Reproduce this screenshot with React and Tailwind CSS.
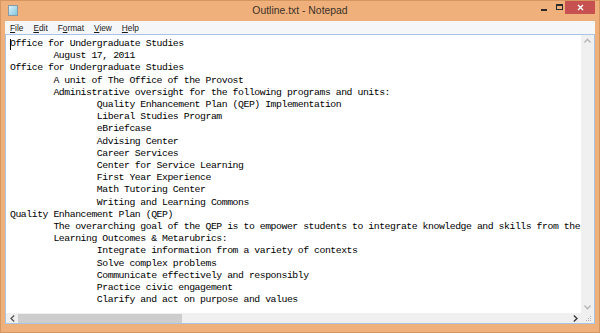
const T = '        ';

const lines = [
  'Office for Undergraduate Studies',
  T + 'August 17, 2011',
  'Office for Undergraduate Studies',
  T + 'A unit of The Office of the Provost',
  T + 'Administrative oversight for the following programs and units:',
  T + T + 'Quality Enhancement Plan (QEP) Implementation',
  T + T + 'Liberal Studies Program',
  T + T + 'eBriefcase',
  T + T + 'Advising Center',
  T + T + 'Career Services',
  T + T + 'Center for Service Learning',
  T + T + 'First Year Experience',
  T + T + 'Math Tutoring Center',
  T + T + 'Writing and Learning Commons',
  'Quality Enhancement Plan (QEP)',
  T + 'The overarching goal of the QEP is to empower students to integrate knowledge and skills from the',
  T + 'Learning Outcomes & Metarubrics:',
  T + T + 'Integrate information from a variety of contexts',
  T + T + 'Solve complex problems',
  T + T + 'Communicate effectively and responsibly',
  T + T + 'Practice civic engagement',
  T + T + 'Clarify and act on purpose and values',
];

const menus = [
  { key: 'F', rest: 'ile' },
  { key: 'E', rest: 'dit' },
  { pre: 'F', key: 'o', rest: 'rmat' },
  { key: 'V', rest: 'iew' },
  { key: 'H', rest: 'elp' },
];

const NotepadIcon = () => (
  <svg width="10" height="11" viewBox="0 0 10 11">
    <defs>
      <linearGradient id="np" x1="0" y1="0" x2="1" y2="1">
        <stop offset="0" stopColor="#dff3fb" />
        <stop offset="1" stopColor="#7cc4dc" />
      </linearGradient>
    </defs>
    <rect x="0.5" y="0.5" width="9" height="10" fill="url(#np)" stroke="#8a9aa4" />
  </svg>
);

const App = () => {
  return (
    <div className="w-[600px] h-[333px] bg-[#f0b07b] border border-[#d6965f] flex flex-col overflow-hidden">
      {/* title bar */}
      <div className="h-[20px] flex items-start relative shrink-0">
        <div className="pl-[7px] pt-[4px]">
          <NotepadIcon />
        </div>
        <div className="absolute left-0 right-0 top-[3px] text-center text-[10.4px] leading-[14px] text-[#3a3029]" style={{ fontFamily: '"Liberation Sans", Arial, sans-serif' }}>
          Outline.txt - Notepad
        </div>
        <div className="ml-auto flex items-start">
          <div className="w-[18px] h-[14px] flex items-center justify-center">
            <div className="w-[6px] h-[2px] bg-[#2b2b2b] mt-[4px]" />
          </div>
          <div className="w-[12px] h-[14px] flex items-center justify-center">
            <div className="w-[7px] h-[6px] border border-[#2b2b2b] border-t-2 -mt-[2px]" />
          </div>
          <div className="w-[30px] h-[14px] bg-[#c75050] flex items-center justify-center mr-[4px] -mt-px">
            <svg width="7" height="7" viewBox="0 0 7 7">
              <path d="M1 1 L6 6 M6 1 L1 6" stroke="#ffffff" strokeWidth="1.4" />
            </svg>
          </div>
        </div>
      </div>

      {/* client */}
      <div className="flex-1 flex flex-col mx-[4px] mb-[8px] min-h-0">
        <div className="h-[13px] bg-[#f5f6f7] flex items-center shrink-0 text-[8.3px] text-[#1a1a1a]" style={{ fontFamily: '"Liberation Sans", Arial, sans-serif' }}>
          {menus.map((m, i) => (
            <span key={i} className="px-[5px] leading-[12px]">
              {m.pre}
              <span className="underline underline-offset-1">{m.key}</span>
              {m.rest}
            </span>
          ))}
        </div>
        <div className="flex-1 border border-[#a9c3e2] bg-white flex flex-col min-h-0">
          <div className="flex-1 flex min-h-0">
            <div className="flex-1 relative overflow-hidden pl-[4px] pt-[3px]">
              <div className="absolute left-[4px] top-[4px] w-px h-[11px] bg-black" />
              <pre
                className="text-[9.8px] leading-[12.2px] tracking-[-0.45px] text-black whitespace-pre m-0"
                style={{ fontFamily: '"Liberation Mono", "Courier New", monospace' }}
              >
                {lines.join('\n')}
              </pre>
            </div>
            <div className="w-[13px] bg-[#f0f0f0] flex flex-col justify-between items-center py-[3px]">
              <svg width="7" height="5" viewBox="0 0 7 5">
                <path d="M0.5 4.5 L3.5 1.2 L6.5 4.5" fill="none" stroke="#b5b5b5" strokeWidth="1.3" />
              </svg>
              <svg width="7" height="5" viewBox="0 0 7 5">
                <path d="M0.5 0.5 L3.5 3.8 L6.5 0.5" fill="none" stroke="#b5b5b5" strokeWidth="1.3" />
              </svg>
            </div>
          </div>
          <div className="h-[10px] flex shrink-0">
            <div className="flex-1 bg-[#f0f0f0] flex items-center">
              <div className="w-[12px] flex justify-center">
                <svg width="5" height="7" viewBox="0 0 5 7">
                  <path d="M4.2 0.5 L1 3.5 L4.2 6.5" fill="none" stroke="#555555" strokeWidth="1.3" />
                </svg>
              </div>
              <div className="w-[164px] h-[9px] bg-[#cdcdcd]" />
              <div className="flex-1" />
              <div className="w-[12px] flex justify-center">
                <svg width="5" height="7" viewBox="0 0 5 7">
                  <path d="M0.8 0.5 L4 3.5 L0.8 6.5" fill="none" stroke="#333333" strokeWidth="1.3" />
                </svg>
              </div>
            </div>
            <div className="w-[13px] bg-[#f0f0f0] flex items-end justify-end pr-[2px] pb-[1px]">
              <svg width="7" height="7" viewBox="0 0 7 7">
                <rect x="5" y="1" width="1" height="1" fill="#b0b0b0" />
                <rect x="3" y="3" width="1" height="1" fill="#b0b0b0" />
                <rect x="5" y="3" width="1" height="1" fill="#b0b0b0" />
                <rect x="1" y="5" width="1" height="1" fill="#b0b0b0" />
                <rect x="3" y="5" width="1" height="1" fill="#b0b0b0" />
                <rect x="5" y="5" width="1" height="1" fill="#b0b0b0" />
              </svg>
            </div>
          </div>
        </div>
      </div>
    </div>
  );
};

export default App;
